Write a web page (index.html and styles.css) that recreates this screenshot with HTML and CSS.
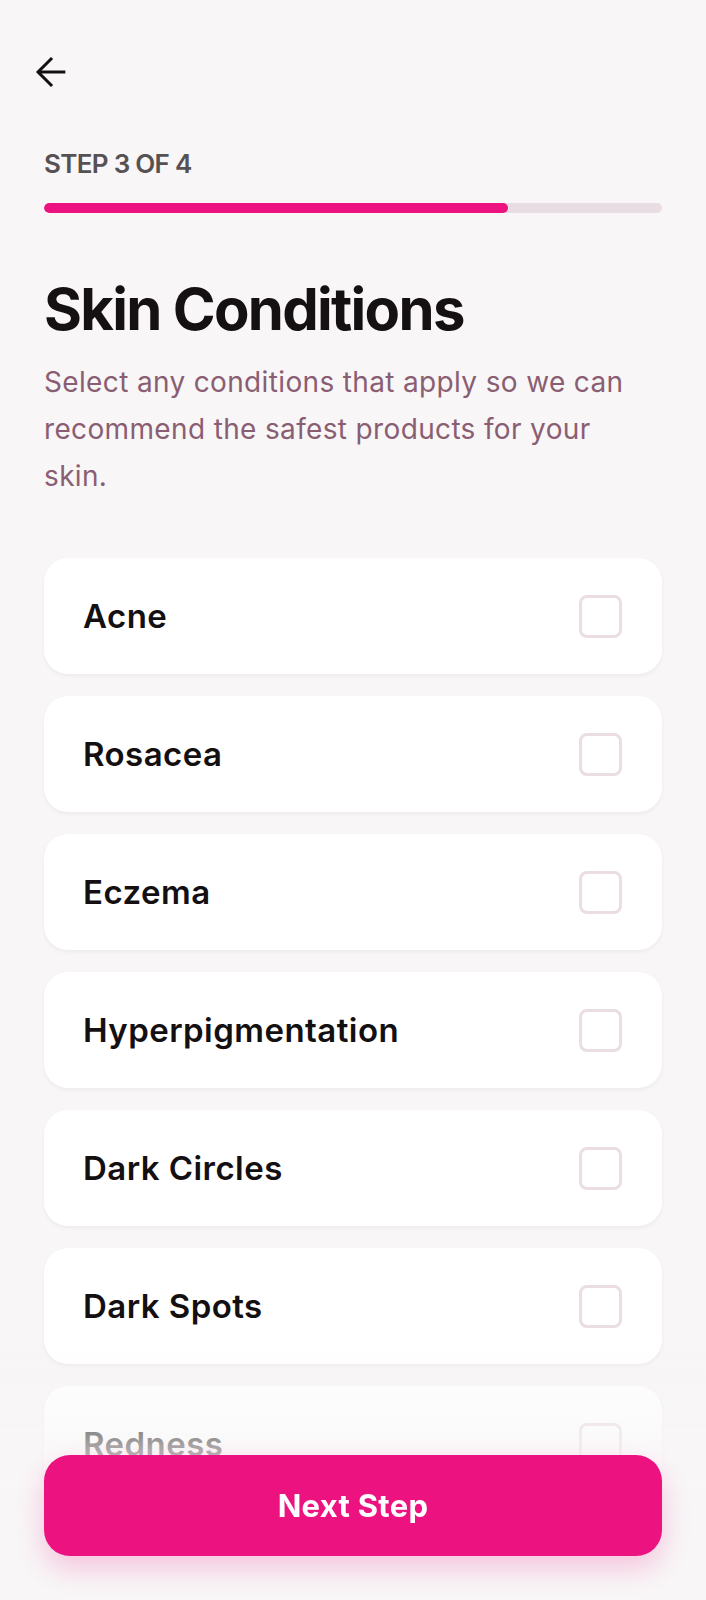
FILE: index.html
```html
<!DOCTYPE html>
<html lang="en">
<head>
<meta charset="utf-8">
<title>Skin Conditions</title>
<link rel="stylesheet" href="styles.css">
</head>
<body>
<main class="screen">
  <header class="topbar">
    <button class="back" aria-label="Back">
      <svg width="42" height="42" viewBox="0 0 24 24" fill="none" stroke="#111" stroke-width="1.7" stroke-linecap="butt" stroke-linejoin="miter">
        <path d="M20.2 12H4.6"/>
        <path d="M12.6 4L4.6 12l8 8"/>
      </svg>
    </button>
  </header>

  <section class="progress-block">
    <div class="step-label">STEP 3 OF 4</div>
    <div class="track"><div class="fill" style="width:75%"></div></div>
  </section>

  <section class="intro">
    <h1 class="title">Skin Conditions</h1>
    <p class="subtitle">Select any conditions that apply so we can recommend the safest products for your skin.</p>
  </section>

  <ul class="options">
    <li class="option"><span class="option-label">Acne</span><span class="check"></span></li>
    <li class="option"><span class="option-label">Rosacea</span><span class="check"></span></li>
    <li class="option"><span class="option-label">Eczema</span><span class="check"></span></li>
    <li class="option"><span class="option-label">Hyperpigmentation</span><span class="check"></span></li>
    <li class="option"><span class="option-label">Dark Circles</span><span class="check"></span></li>
    <li class="option"><span class="option-label">Dark Spots</span><span class="check"></span></li>
    <li class="option"><span class="option-label">Redness</span><span class="check"></span></li>
    <li class="option"><span class="option-label">Sensitive Skin</span><span class="check"></span></li>
  </ul>
</main>

<footer class="footer">
  <button class="next">Next Step</button>
</footer>
</body>
</html>
```

FILE: styles.css
```css
* { box-sizing: border-box; }

html, body {
  margin: 0;
  padding: 0;
  background: #f8f6f7;
}

body {
  font-family: Inter, "Liberation Sans", sans-serif;
  color: #151112;
}

.screen {
  padding: 0 44px 300px;
}

.topbar {
  padding-top: 51px;
  height: 93px;
}

.back {
  display: block;
  width: 42px;
  height: 42px;
  margin-left: -14px;
  padding: 0;
  border: 0;
  background: transparent;
}

.back svg { display: block; }

.progress-block {
  padding-top: 55px;
}

.step-label {
  font-size: 26px;
  line-height: 32px;
  font-weight: 600;
  color: #565153;
  letter-spacing: -0.7px;
}

.track {
  margin-top: 23px;
  height: 10px;
  border-radius: 5px;
  background: #e8dde2;
  overflow: hidden;
}

.fill {
  height: 100%;
  border-radius: 5px;
  background: #ec1380;
}

.intro {
  padding-top: 61px;
}

.title {
  margin: 0;
  font-size: 58px;
  line-height: 70px;
  font-weight: 700;
  letter-spacing: -1.7px;
  color: #151112;
}

.subtitle {
  margin: 15px 0 0;
  font-size: 28px;
  line-height: 47px;
  font-weight: 400;
  color: #8a5e72;
  letter-spacing: 0.35px;
}

.options {
  list-style: none;
  margin: 58px 0 0;
  padding: 0;
  display: flex;
  flex-direction: column;
  gap: 22px;
}

.option {
  height: 116px;
  background: #ffffff;
  border-radius: 24px;
  box-shadow: 0 2px 4px rgba(60, 20, 40, 0.05);
  display: flex;
  align-items: center;
  justify-content: space-between;
  padding: 0 40px 0 39px;
}

.option-label {
  font-size: 33px;
  font-weight: 600;
  letter-spacing: 0.45px;
  color: #141011;
}

.check {
  width: 43px;
  height: 43px;
  border: 3.5px solid #eadde3;
  border-radius: 8px;
  background: #fff;
}

.footer {
  position: fixed;
  left: 0;
  right: 0;
  bottom: 0;
  padding: 115px 44px 44px;
  background: linear-gradient(to bottom, rgba(248, 246, 247, 0) 0%, rgba(248, 246, 247, 0.42) 30%, #f8f6f7 58%);
}

.next {
  display: block;
  width: 100%;
  height: 101px;
  border: 0;
  border-radius: 26px;
  background: #ec1380;
  color: #ffffff;
  font-family: Inter, "Liberation Sans", sans-serif;
  font-size: 31px;
  font-weight: 700;
  letter-spacing: 0.3px;
  box-shadow: 0 12px 28px rgba(236, 19, 128, 0.22);
}
```
